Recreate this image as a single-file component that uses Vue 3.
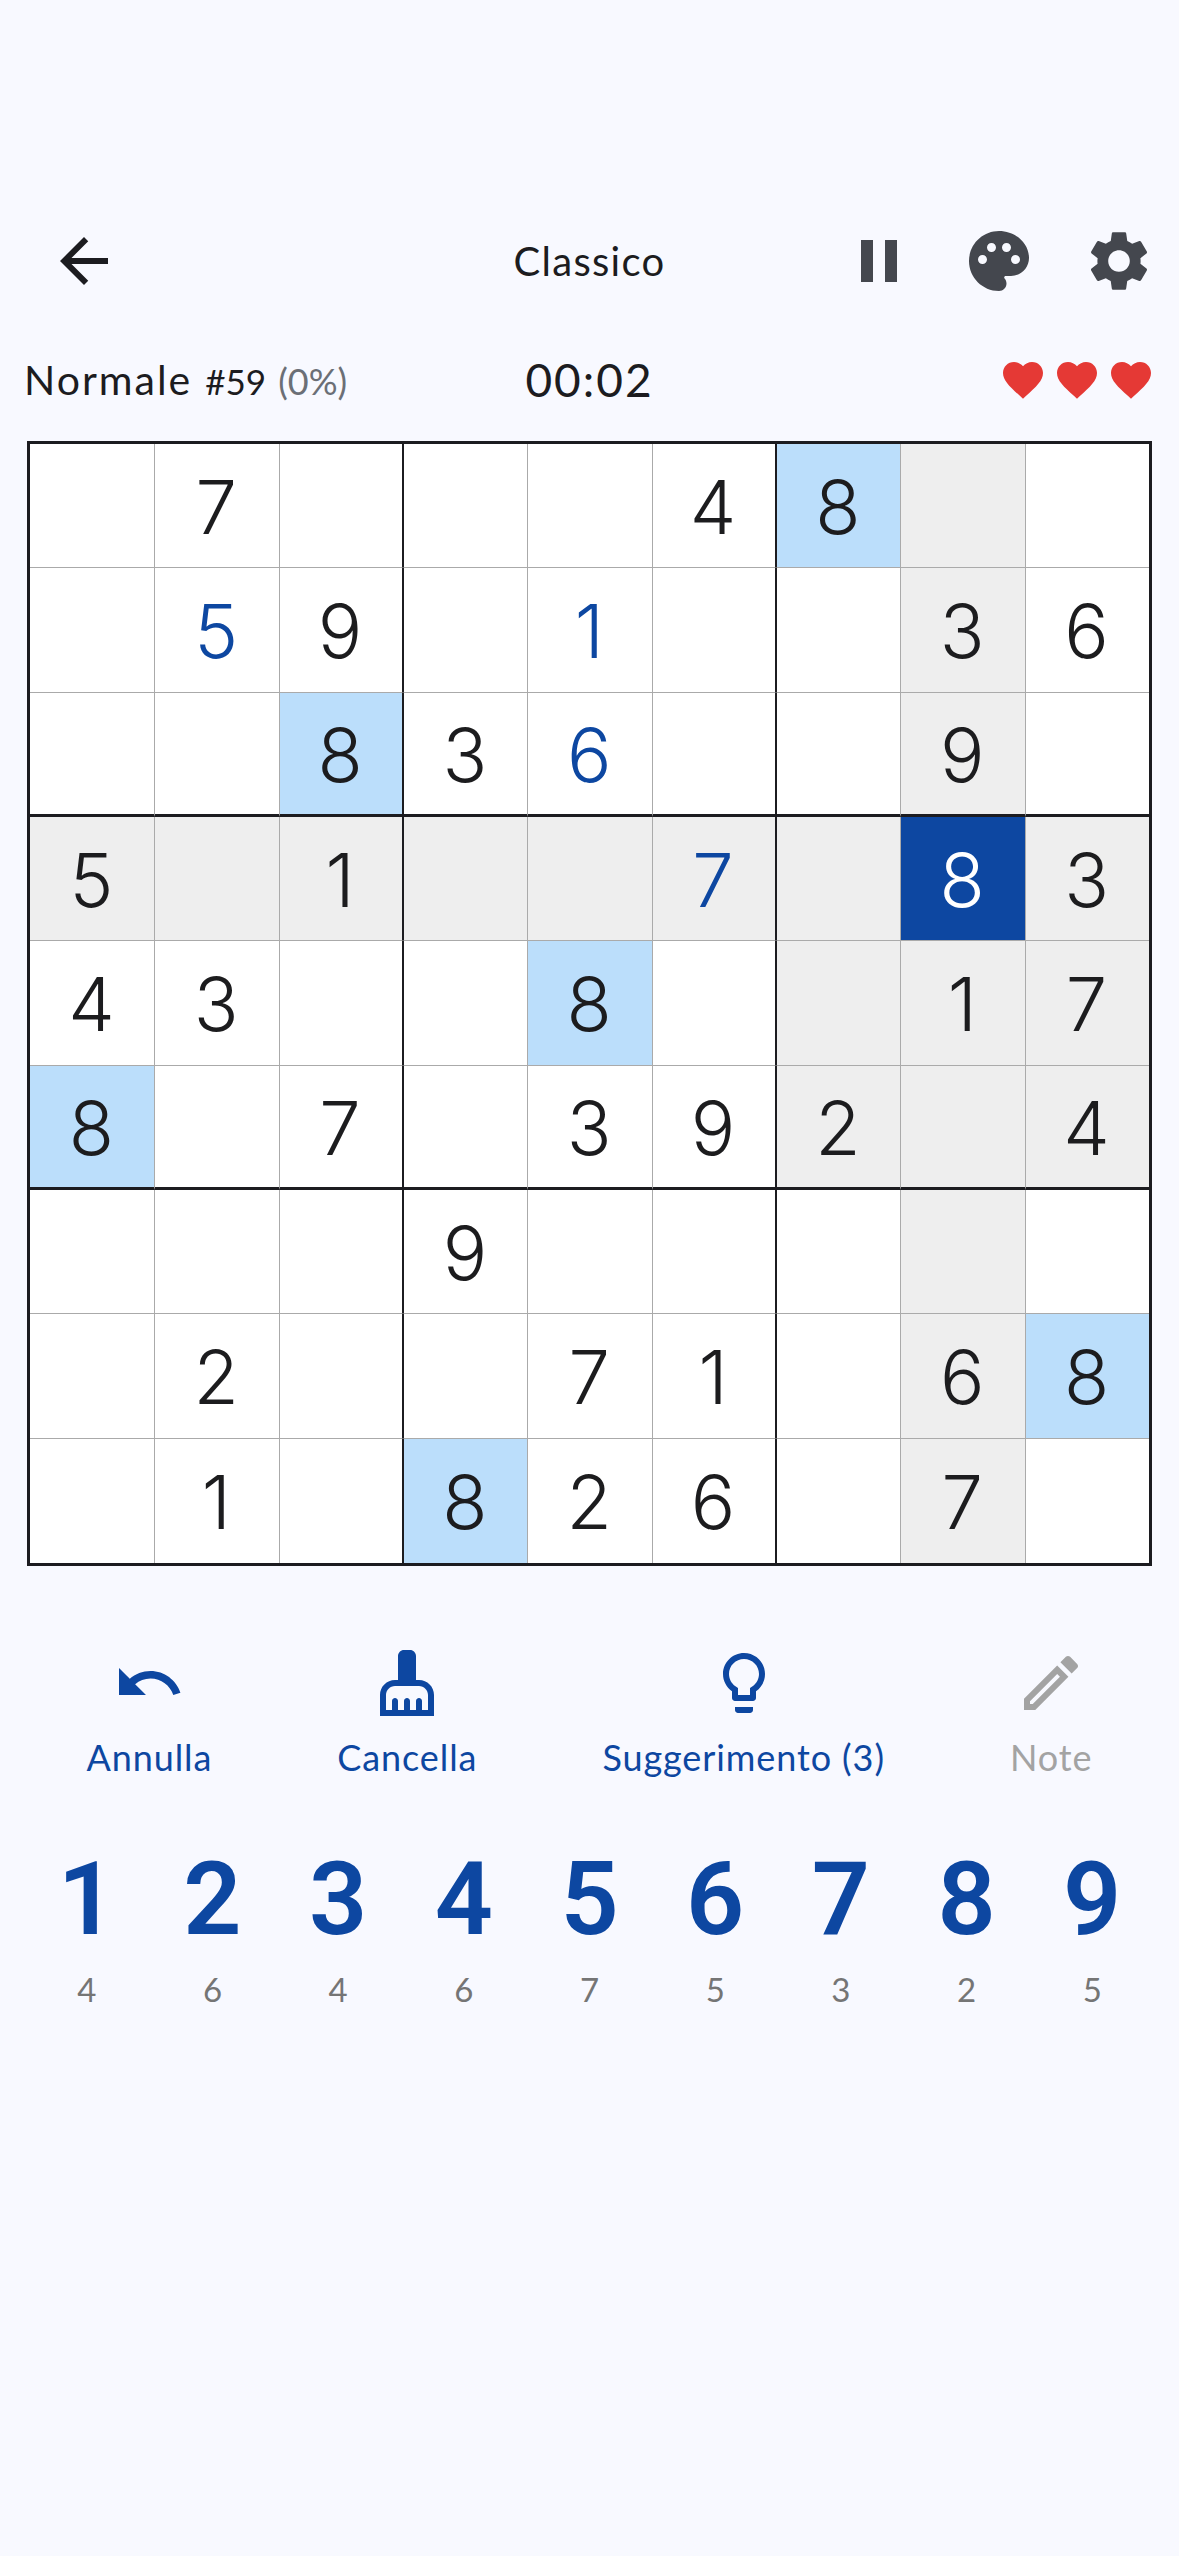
<script setup>
// cell format: digit, b = player's blue digit, h = same number, g = row/col/box, s = selected
const rows = [
  ['', '7', '', '', '', '4', '8h', 'g', ''],
  ['', '5b', '9', '', '1b', '', '', '3g', '6'],
  ['', '', '8h', '3', '6b', '', '', '9g', ''],
  ['5g', 'g', '1g', 'g', 'g', '7bg', 'g', '8s', '3g'],
  ['4', '3', '', '', '8h', '', 'g', '1g', '7g'],
  ['8h', '', '7', '', '3', '9', '2g', 'g', '4g'],
  ['', '', '', '9', '', '', '', 'g', ''],
  ['', '2', '', '', '7', '1', '', '6g', '8h'],
  ['', '1', '', '8h', '2', '6', '', '7g', '']
]

const cells = rows.flat().map((raw, i) => {
  const col = i % 9
  const row = Math.floor(i / 9)
  return {
    id: i,
    value: raw.replace(/[a-z]/g, ''),
    classes: {
      blue: raw.includes('b'),
      hl: raw.includes('h'),
      grey: raw.includes('g'),
      selected: raw.includes('s'),
      'box-start': col === 3 || col === 6,
      'box-end': col === 2 || col === 5,
      'box-bottom': row === 2 || row === 5,
      'first-col': col === 0,
      'last-row': row === 8
    }
  }
})

const numbers = [
  { n: 1, left: 4 }, { n: 2, left: 6 }, { n: 3, left: 4 },
  { n: 4, left: 6 }, { n: 5, left: 7 }, { n: 6, left: 5 },
  { n: 7, left: 3 }, { n: 8, left: 2 }, { n: 9, left: 5 }
]

const heart = 'M12 21.35l-1.45-1.32C5.4 15.36 2 12.28 2 8.5 2 5.42 4.42 3 7.5 3c1.74 0 3.41.81 4.5 2.09C13.09 3.81 14.76 3 16.5 3 19.58 3 22 5.42 22 8.5c0 3.78-3.4 6.86-8.55 11.54L12 21.35z'
</script>

<template>
  <div class="screen">
    <header class="topbar">
      <div class="side">
        <svg class="icon back" viewBox="0 0 24 24"><path fill="#1c1c20" d="M20 11H7.83l5.59-5.59L12 4l-8 8 8 8 1.41-1.41L7.83 13H20v-2z" /></svg>
      </div>
      <h1 class="title">Classico</h1>
      <div class="side right">
        <svg class="icon" viewBox="0 0 24 24"><path fill="#44474e" d="M6 19h4V5H6v14zm8-14v14h4V5h-4z" /></svg>
        <svg class="icon" viewBox="0 0 24 24"><path fill="#44474e" d="M12 2C6.49 2 2 6.49 2 12s4.49 10 10 10c1.38 0 2.5-1.12 2.5-2.5 0-.61-.23-1.2-.64-1.67-.08-.1-.13-.21-.13-.33 0-.28.22-.5.5-.5H16c3.31 0 6-2.69 6-6 0-4.96-4.49-9-10-9zm5.5 11c-.83 0-1.5-.67-1.5-1.5s.67-1.5 1.5-1.5 1.5.67 1.5 1.5-.67 1.5-1.5 1.5zm-3-4c-.83 0-1.5-.67-1.5-1.5S13.67 6 14.5 6s1.5.67 1.5 1.5S15.33 9 14.5 9zM5 11.5c0-.83.67-1.5 1.5-1.5s1.5.67 1.5 1.5S7.33 13 6.5 13 5 12.33 5 11.5zm6-4c0 .83-.67 1.5-1.5 1.5S8 8.33 8 7.5 8.67 6 9.5 6s1.5.67 1.5 1.5z" /></svg>
        <svg class="icon" viewBox="0 0 24 24"><path fill="#44474e" d="M19.14 12.94c.04-.3.06-.61.06-.94 0-.32-.02-.64-.07-.94l2.03-1.58c.18-.14.23-.41.12-.61l-1.92-3.32c-.12-.22-.37-.29-.59-.22l-2.39.96c-.5-.38-1.03-.7-1.62-.94l-.36-2.54c-.04-.24-.24-.41-.48-.41h-3.84c-.24 0-.43.17-.47.41l-.36 2.54c-.59.24-1.13.57-1.62.94l-2.39-.96c-.22-.08-.47 0-.59.22L2.74 8.87c-.12.21-.08.47.12.61l2.03 1.58c-.05.3-.09.63-.09.94s.02.64.07.94l-2.03 1.58c-.18.14-.23.41-.12.61l1.92 3.32c.12.22.37.29.59.22l2.39-.96c.5.38 1.03.7 1.62.94l.36 2.54c.05.24.24.41.48.41h3.84c.24 0 .44-.17.47-.41l.36-2.54c.59-.24 1.13-.56 1.62-.94l2.39.96c.22.08.47 0 .59-.22l1.92-3.32c.12-.22.07-.47-.12-.61l-2.01-1.58zM12 15.6c-1.98 0-3.6-1.62-3.6-3.6s1.62-3.6 3.6-3.6 3.6 1.62 3.6 3.6-1.62 3.6-3.6 3.6z" /></svg>
      </div>
    </header>

    <div class="status">
      <div class="level">
        <span class="diff">Normale</span>
        <span class="num">#59</span>
        <span class="pct">(0%)</span>
      </div>
      <div class="timer">00:02</div>
      <div class="hearts">
        <svg v-for="i in 3" :key="i" class="heart" viewBox="0 0 24 24"><path fill="#e53935" :d="heart" /></svg>
      </div>
    </div>

    <div class="board">
      <div v-for="c in cells" :key="c.id" class="cell" :class="c.classes">{{ c.value }}</div>
    </div>

    <div class="actions">
      <div class="action">
        <svg class="icon" viewBox="0 0 24 24"><path fill="#0d47a1" d="M12.5 8c-2.65 0-5.05.99-6.9 2.6L2 7v9h9l-3.62-3.62c1.39-1.16 3.16-1.88 5.12-1.88 3.54 0 6.55 2.31 7.6 5.5l2.37-.78C21.08 11.03 17.15 8 12.5 8z" /></svg>
        <span>Annulla</span>
      </div>
      <div class="action">
        <svg class="icon" viewBox="0 0 24 24"><path fill="#0d47a1" d="M16 11h-1V3c0-1.1-.9-2-2-2h-2c-1.1 0-2 .9-2 2v8H8c-2.76 0-5 2.24-5 5v7h18v-7c0-2.76-2.24-5-5-5zm3 10h-2v-3c0-.55-.45-1-1-1s-1 .45-1 1v3h-2v-3c0-.55-.45-1-1-1s-1 .45-1 1v3H9v-3c0-.55-.45-1-1-1s-1 .45-1 1v3H5v-5c0-1.65 1.35-3 3-3h8c1.65 0 3 1.35 3 3v5z" /></svg>
        <span>Cancella</span>
      </div>
      <div class="action">
        <svg class="icon" viewBox="0 0 24 24"><path fill="#0d47a1" d="M9 21c0 .55.45 1 1 1h4c.55 0 1-.45 1-1v-1H9v1zm3-19C8.14 2 5 5.14 5 9c0 2.38 1.19 4.47 3 5.74V17c0 .55.45 1 1 1h6c.55 0 1-.45 1-1v-2.26c1.81-1.27 3-3.36 3-5.74 0-3.86-3.14-7-7-7zm2.85 11.1l-.85.6V16h-4v-2.3l-.85-.6C7.8 12.16 7 10.63 7 9c0-2.76 2.24-5 5-5s5 2.24 5 5c0 1.63-.8 3.16-2.15 4.1z" /></svg>
        <span>Suggerimento (3)</span>
      </div>
      <div class="action off">
        <svg class="icon" viewBox="0 0 24 24"><path fill="#a3a3a3" d="M14.06 9.02l.92.92L5.92 19H5v-.92l9.06-9.06M17.66 3c-.25 0-.51.1-.7.29l-1.83 1.83 3.75 3.75 1.83-1.83c.39-.39.39-1.02 0-1.41l-2.34-2.34c-.2-.2-.45-.29-.71-.29zm-3.6 3.19L3 17.25V21h3.75L17.81 9.94l-3.75-3.75z" /></svg>
        <span>Note</span>
      </div>
    </div>

    <div class="numpad">
      <div v-for="item in numbers" :key="item.n" class="key">
        <span class="key-n">{{ item.n }}</span>
        <span class="key-left">{{ item.left }}</span>
      </div>
    </div>
  </div>
</template>

<style>
html, body {
  margin: 0;
  background: #f8f9ff;
}
</style>

<style scoped>
.screen {
  height: 2556px;
  box-sizing: border-box;
  padding-top: 225px;
  background: #f8f9ff;
  font-family: "Lato", "Noto Sans", sans-serif;
  color: #1c1c20;
  overflow: hidden;
}
.icon {
  display: block;
  width: 72px;
  height: 72px;
  flex: none;
}
.back {
  margin-left: 24px;
}

.topbar {
  display: grid;
  grid-template-columns: minmax(0, 1fr) auto minmax(0, 1fr);
  align-items: center;
  padding: 0 24px;
}
.side {
  display: flex;
}
.side.right {
  justify-content: flex-end;
  gap: 48px;
}
.title {
  margin: 0;
  font-size: 40px;
  font-weight: 400;
  letter-spacing: 1.3px;
  line-height: 72px;
}

.status {
  display: grid;
  grid-template-columns: minmax(0, 1fr) auto minmax(0, 1fr);
  align-items: center;
  height: 48px;
  margin-top: 58px;
  padding: 0 24px;
}
.level {
  display: flex;
  align-items: baseline;
  white-space: nowrap;
}
.diff {
  font-size: 41px;
  letter-spacing: 2px;
}
.num {
  margin-left: 13px;
  font-size: 35px;
}
.pct {
  margin-left: 12px;
  font-size: 36px;
  color: #6b6f76;
}
.timer {
  font-size: 46px;
  letter-spacing: 2px;
  line-height: 48px;
}
.hearts {
  display: flex;
  justify-content: flex-end;
  gap: 6px;
}
.heart {
  width: 48px;
  height: 48px;
}

.board {
  display: grid;
  grid-template-columns: repeat(9, 1fr);
  grid-template-rows: repeat(9, 1fr);
  width: 1125px;
  height: 1125px;
  box-sizing: border-box;
  margin: 38px 0 0 27px;
  border: 3px solid #1c1c20;
  background: #fff;
}
.cell {
  display: flex;
  align-items: center;
  justify-content: center;
  min-width: 0;
  min-height: 0;
  box-sizing: border-box;
  padding: 3px 1.5px 0 0;
  border-left: 1.5px solid #aaaaaa;
  border-bottom: 1.5px solid #aaaaaa;
  font-family: "Inter", sans-serif;
  font-size: 74px;
  font-weight: 350;
  color: #1c1c1e;
}
.cell.box-start {
  border-left: 1.5px solid #1c1c20;
}
.cell.box-end {
  border-right: 1.5px solid #1c1c20;
}
.cell.box-bottom {
  border-bottom: 3px solid #1c1c20;
}
.cell.first-col {
  border-left: none;
}
.cell.last-row {
  border-bottom: none;
}
.cell.grey {
  background: #eeeeee;
}
.cell.hl {
  background: #bbdefb;
}
.cell.selected {
  background: #0d47a1;
  color: #fff;
}
.cell.blue {
  color: #0d47a1;
}

.actions {
  display: flex;
  justify-content: space-around;
  margin-top: 81px;
  padding: 0 24px;
}
.action {
  display: flex;
  flex-direction: column;
  align-items: center;
  gap: 15px;
  font-size: 36px;
  letter-spacing: 0.9px;
  line-height: 46px;
  color: #0d47a1;
}
.action.off {
  color: #a3a3a3;
}

.numpad {
  display: flex;
  margin-top: 59px;
  padding: 0 24px;
}
.key {
  flex: 1;
  display: flex;
  flex-direction: column;
  align-items: center;
}
.key-n {
  font-family: "Roboto", sans-serif;
  font-size: 102px;
  font-weight: 600;
  line-height: 120px;
  color: #0d47a1;
}
.key-left {
  margin-top: 10px;
  font-size: 33px;
  line-height: 40px;
  color: #757575;
}
</style>
